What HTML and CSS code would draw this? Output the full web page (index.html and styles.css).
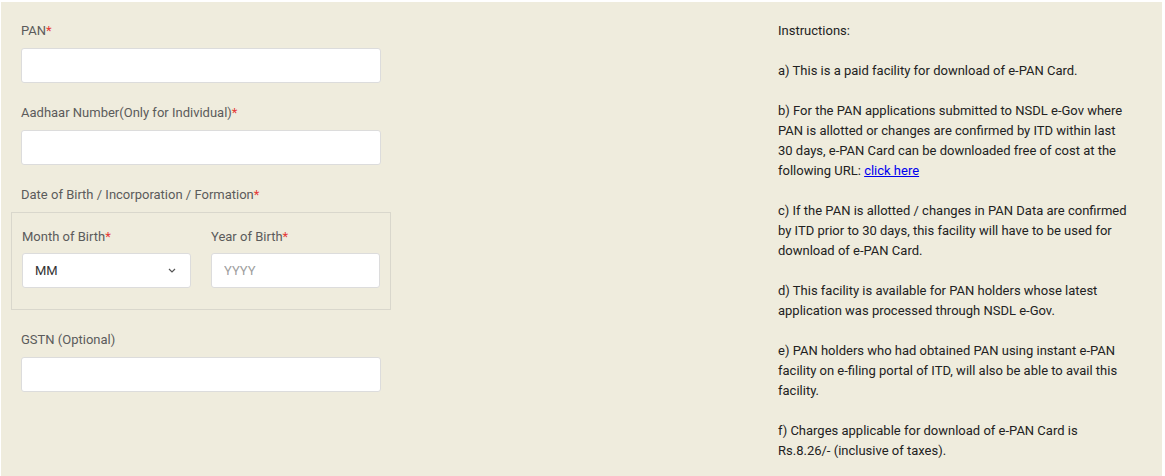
FILE: index.html
```html
<!DOCTYPE html>
<html lang="en">
<head>
<meta charset="utf-8">
<title>e-PAN Download</title>
<link rel="stylesheet" href="styles.css">
</head>
<body>
<div class="page">
  <form class="form-col">
    <div class="field">
      <label class="lbl">PAN<span class="req">*</span></label>
      <input class="inp" type="text">
    </div>
    <div class="field">
      <label class="lbl">Aadhaar Number(Only for Individual)<span class="req">*</span></label>
      <input class="inp" type="text">
    </div>
    <div class="field">
      <label class="lbl">Date of Birth / Incorporation / Formation<span class="req">*</span></label>
      <div class="dob-box">
        <div class="sub">
          <label class="lbl">Month of Birth<span class="req">*</span></label>
          <div class="select">
            <span>MM</span>
            <svg class="chev" width="8" height="5" viewBox="0 0 8 5"><path d="M1 1 L4 4 L7 1" fill="none" stroke="#555" stroke-width="1.2"/></svg>
          </div>
        </div>
        <div class="sub">
          <label class="lbl">Year of Birth<span class="req">*</span></label>
          <input class="inp" type="text" placeholder="YYYY">
        </div>
      </div>
    </div>
    <div class="field">
      <label class="lbl">GSTN (Optional)</label>
      <input class="inp" type="text">
    </div>
  </form>
  <div class="instr">
    <p>Instructions:</p>
    <p>a) This is a paid facility for download of e-PAN Card.</p>
    <p>b) For the PAN applications submitted to NSDL e-Gov where PAN is allotted or changes are confirmed by ITD within last 30 days, e-PAN Card can be downloaded free of cost at the following URL: <a href="#">click here</a></p>
    <p>c) If the PAN is allotted / changes in PAN Data are confirmed by ITD prior to 30 days, this facility will have to be used for download of e-PAN Card.</p>
    <p>d) This facility is available for PAN holders whose latest application was processed through NSDL e-Gov.</p>
    <p>e) PAN holders who had obtained PAN using instant e-PAN facility on e-filing portal of ITD, will also be able to avail this facility.</p>
    <p>f) Charges applicable for download of e-PAN Card is Rs.8.26/- (inclusive of taxes).</p>
  </div>
</div>
</body>
</html>
```

FILE: styles.css
```css
* { box-sizing: border-box; }
html, body { margin: 0; padding: 0; background: #ffffff; }
body {
  font-family: Roboto, "Liberation Sans", Arial, sans-serif;
  font-size: 13px;
  line-height: 20px;
}
.page {
  margin: 2px 3px 0 1px;
  height: 474px;
  background: #efecdd;
  display: grid;
  grid-template-columns: 777px 1fr;
  overflow: hidden;
}
.form-col {
  padding: 19px 0 0 20px;
  width: 380px;
  margin: 0;
}
.field { margin-bottom: 20px; }
.lbl {
  display: block;
  color: #5b5b5b;
  margin-bottom: 7px;
}
.req { color: #e53935; }
.inp {
  display: block;
  width: 360px;
  height: 35px;
  background: #fff;
  border: 1px solid #dcdcdc;
  border-radius: 3px;
  padding: 0 12px;
  font: inherit;
  color: #333;
  outline: none;
}
.inp::placeholder { color: #a0a0a0; }
.dob-box {
  margin: 0 -10px;
  border: 1px solid #d9d7cc;
  padding: 14px 10px 21px;
  display: grid;
  grid-template-columns: 169px 169px;
  column-gap: 20px;
}
.sub .lbl { margin-bottom: 6px; }
.sub .inp { width: 169px; }
.select {
  height: 35px;
  background: #fff;
  border: 1px solid #dcdcdc;
  border-radius: 3px;
  padding: 0 14px 0 12px;
  display: flex;
  align-items: center;
  justify-content: space-between;
  color: #333;
}
.chev { display: block; }
.instr {
  padding: 19px 0 0 0;
  width: 355px;
  color: #222;
}
.instr p { margin: 0 0 20px; }
.instr a { color: #0000ee; text-decoration: underline; }
```
